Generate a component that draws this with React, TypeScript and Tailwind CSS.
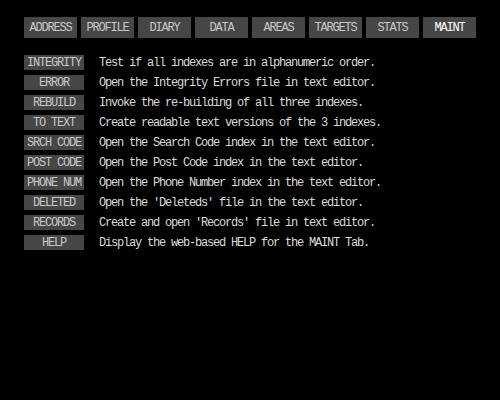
import React from 'react';

const tabs = ['ADDRESS', 'PROFILE', 'DIARY', 'DATA', 'AREAS', 'TARGETS', 'STATS', 'MAINT'];

const actions = [
  { label: 'INTEGRITY', text: 'Test if all indexes are in alphanumeric order.' },
  { label: 'ERROR', text: 'Open the Integrity Errors file in text editor.' },
  { label: 'REBUILD', text: 'Invoke the re-building of all three indexes.' },
  { label: 'TO TEXT', text: 'Create readable text versions of the 3 indexes.' },
  { label: 'SRCH CODE', text: 'Open the Search Code index in the text editor.' },
  { label: 'POST CODE', text: 'Open the Post Code index in the text editor.' },
  { label: 'PHONE NUM', text: 'Open the Phone Number index in the text editor.' },
  { label: 'DELETED', text: "Open the 'Deleteds' file in the text editor." },
  { label: 'RECORDS', text: "Create and open 'Records' file in text editor." },
  { label: 'HELP', text: 'Display the web-based HELP for the MAINT Tab.' },
];

export default function App() {
  return (
    <div className="w-[500px] h-[400px] bg-black overflow-hidden font-['Liberation_Mono',monospace] text-[12px] tracking-[-1.2px]">
      {/* Tab bar */}
      <div className="flex gap-[4px] pl-[24px] pt-[17px]">
        {tabs.map((tab) =>
        <div
          key={tab}
          className={`w-[53px] h-[21px] bg-[#464646] flex items-center justify-center leading-none ${tab === 'MAINT' ? 'text-white' : 'text-[#c8c8c8]'}`}>
          
            {tab}
          </div>
        )}
      </div>

      {/* Maintenance actions */}
      <div className="flex flex-col gap-[5px] pl-[24px] pt-[17px]">
        {actions.map((a) =>
        <div key={a.label} className="flex items-center gap-[15px] h-[15px]">
            <div className="w-[60px] h-[15px] bg-[#464646] text-[#c8c8c8] flex items-center justify-center leading-none whitespace-nowrap">
              {a.label}
            </div>
            <span className="text-[#dcdcdc] leading-none whitespace-nowrap">{a.text}</span>
          </div>
        )}
      </div>
    </div>);

}
